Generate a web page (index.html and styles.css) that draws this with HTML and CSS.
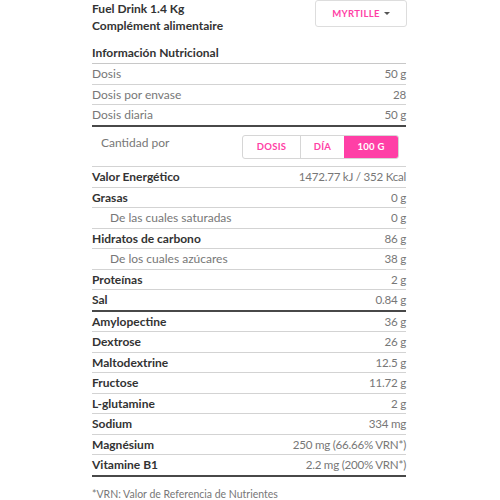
FILE: index.html
```html
<!DOCTYPE html>
<html>
<head>
<meta charset="utf-8">
<link rel="stylesheet" href="styles.css">
</head>
<body>
<div class="panel">
  <div class="header">
    <div class="title">
      <div>Fuel Drink 1.4 Kg</div>
      <div>Complément alimentaire</div>
    </div>
    <div class="dropdown">MYRTILLE <span class="caret"></span></div>
  </div>
  <div class="heading">Información Nutricional</div>
  <div class="row light"><span>Dosis</span><span class="val">50 g</span></div>
  <div class="row light"><span>Dosis por envase</span><span class="val">28</span></div>
  <div class="row light thick"><span>Dosis diaria</span><span class="val">50 g</span></div>
  <div class="qty">
    <span class="qty-label">Cantidad por</span>
    <div class="seg">
      <span class="seg-btn s1">DOSIS</span>
      <span class="seg-btn s2">DÍA</span>
      <span class="seg-btn s3 active">100 G</span>
    </div>
  </div>
  <div class="row"><span>Valor Energético</span><span class="val">1472.77 kJ / 352 Kcal</span></div>
  <div class="row"><span>Grasas</span><span class="val">0 g</span></div>
  <div class="row sub"><span>De las cuales saturadas</span><span class="val">0 g</span></div>
  <div class="row"><span>Hidratos de carbono</span><span class="val">86 g</span></div>
  <div class="row sub"><span>De los cuales azúcares</span><span class="val">38 g</span></div>
  <div class="row"><span>Proteínas</span><span class="val">2 g</span></div>
  <div class="row thick"><span>Sal</span><span class="val">0.84 g</span></div>
  <div class="row"><span>Amylopectine</span><span class="val">36 g</span></div>
  <div class="row"><span>Dextrose</span><span class="val">26 g</span></div>
  <div class="row"><span>Maltodextrine</span><span class="val">12.5 g</span></div>
  <div class="row"><span>Fructose</span><span class="val">11.72 g</span></div>
  <div class="row"><span>L-glutamine</span><span class="val">2 g</span></div>
  <div class="row"><span>Sodium</span><span class="val">334 mg</span></div>
  <div class="row"><span>Magnésium</span><span class="val">250 mg (66.66% VRN*)</span></div>
  <div class="row thick"><span>Vitamine B1</span><span class="val">2.2 mg (200% VRN*)</span></div>
  <div class="note">*VRN: Valor de Referencia de Nutrientes</div>
</div>
</body>
</html>
```
FILE: styles.css
```css
html, body {
  margin: 0;
  padding: 0;
  background: #fff;
}
body {
  font-family: "Lato", "Open Sans", sans-serif;
  font-size: 12px;
  color: #333;
}
.panel {
  width: 314px;
  margin-left: 92px;
}
.header {
  display: flex;
  justify-content: space-between;
  align-items: flex-start;
  height: 34px;
}
.title {
  font-weight: 700;
  font-size: 12px;
  line-height: 17px;
  color: #333;
}
.dropdown {
  box-sizing: border-box;
  width: 92px;
  height: 27px;
  border: 1px solid #ddd;
  border-radius: 3px;
  display: flex;
  align-items: center;
  justify-content: center;
  gap: 4px;
  color: #ff3fa6;
  font-size: 9.5px;
  font-weight: 700;
  letter-spacing: 0.3px;
  margin-right: -1px;
}
.caret {
  width: 0;
  height: 0;
  border-left: 3px solid transparent;
  border-right: 3px solid transparent;
  border-top: 3px solid #555;
}
.heading {
  margin-top: 9px;
  line-height: 20px;
  font-weight: 700;
  font-size: 12px;
  border-bottom: 1px solid #c8c8c8;
}
.row {
  display: flex;
  justify-content: space-between;
  align-items: center;
  height: 19.5px;
  font-size: 12px;
  font-weight: 700;
  color: #333;
  border-bottom: 1px solid #d3d3d3;
}
.row .val {
  font-weight: 400;
  color: #777;
  font-size: 11.6px;
  letter-spacing: -0.25px;
}
.row.light {
  font-weight: 400;
  color: #777;
}
.row.sub {
  font-weight: 400;
  color: #777;
  padding-left: 18px;
}
.row.thick {
  border-bottom: 2px solid #484848;
}
.qty {
  display: flex;
  justify-content: space-between;
  align-items: flex-start;
  padding: 8px 7px 7.5px 9px;
  border-bottom: 1px solid #d3d3d3;
}
.qty-label {
  color: #777;
  font-size: 12px;
  line-height: 16px;
}
.seg {
  display: flex;
  height: 24px;
  box-sizing: border-box;
  border: 1px solid #d6d6d6;
  border-radius: 3px;
  overflow: hidden;
}
.seg-btn {
  display: flex;
  align-items: center;
  justify-content: center;
  font-size: 9.5px;
  font-weight: 700;
  color: #ff3fa6;
  letter-spacing: 0.3px;
}
.s1 { width: 57px; border-right: 1px solid #d6d6d6; }
.s2 { width: 43px; }
.s3 { width: 54px; }
.seg-btn.active {
  background: #ff3fa6;
  color: #fff;
}
.note {
  margin-top: 11px;
  line-height: 12px;
  font-size: 10.5px;
  color: #777;
}
```
